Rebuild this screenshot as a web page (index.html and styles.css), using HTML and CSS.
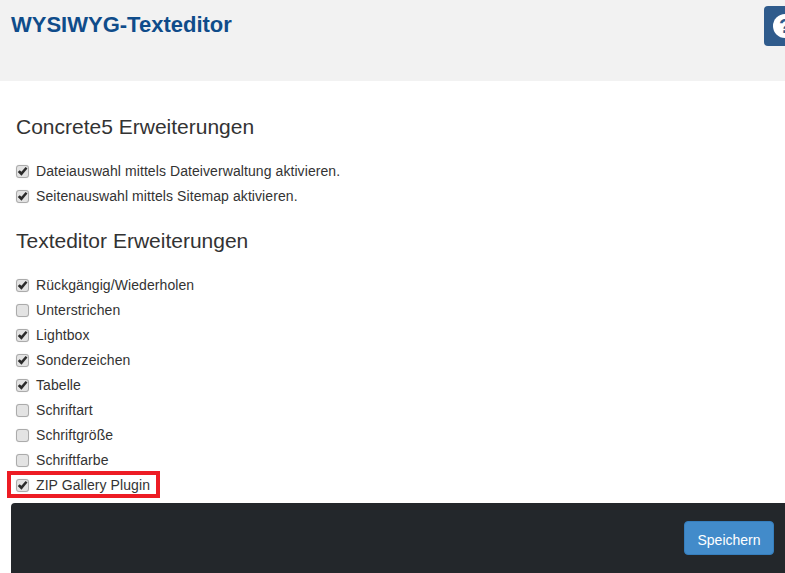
FILE: index.html
```html
<!DOCTYPE html>
<html>
<head>
    <title>WYSIWYG-Texteditor</title>
    <link rel="stylesheet" href="styles.css">
</head>
<body>
    <svg class="icon-defs" width="0" height="0">
        <symbol id="tick" viewBox="0 0 12 12">
            <path d="M0.8 6.6 L3 4.6 L4.8 6.4 L9.4 1 L11.4 2.8 L4.9 10.6 Z"></path>
        </symbol>
    </svg>

    <div class="header">
        <h1>WYSIWYG-Texteditor</h1>
        <button class="help-button">
            <span class="help-icon">?</span>
        </button>
    </div>

    <div class="content">
        <h2>Concrete5 Erweiterungen</h2>
        <div class="check-list">
            <label class="check-row"><span class="box"><svg><use href="#tick"></use></svg></span>Dateiauswahl mittels Dateiverwaltung aktivieren.</label>
            <label class="check-row"><span class="box"><svg><use href="#tick"></use></svg></span>Seitenauswahl mittels Sitemap aktivieren.</label>
        </div>

        <h2 class="second-title">Texteditor Erweiterungen</h2>
        <div class="check-list">
            <label class="check-row"><span class="box"><svg><use href="#tick"></use></svg></span>Rückgängig/Wiederholen</label>
            <label class="check-row"><span class="box"></span>Unterstrichen</label>
            <label class="check-row"><span class="box"><svg><use href="#tick"></use></svg></span>Lightbox</label>
            <label class="check-row"><span class="box"><svg><use href="#tick"></use></svg></span>Sonderzeichen</label>
            <label class="check-row"><span class="box"><svg><use href="#tick"></use></svg></span>Tabelle</label>
            <label class="check-row"><span class="box"></span>Schriftart</label>
            <label class="check-row"><span class="box"></span>Schriftgröße</label>
            <label class="check-row"><span class="box"></span>Schriftfarbe</label>
            <label class="check-row marked"><span class="box"><svg><use href="#tick"></use></svg></span>ZIP Gallery Plugin</label>
        </div>
    </div>

    <div class="footer">
        <button class="save-button">Speichern</button>
    </div>
</body>
</html>
```

FILE: styles.css
```css
html, body {
    height: 100%;
}

body {
    display: flex;
    flex-direction: column;
    margin: 0;
    overflow: hidden;
    background-color: #ffffff;
    color: #333333;
    font-family: "Liberation Sans", Arial, sans-serif;
    font-size: 14px;
}

.icon-defs {
    position: absolute;
}

.header {
    display: flex;
    justify-content: space-between;
    align-items: flex-start;
    height: 81px;
    flex-shrink: 0;
    background-color: #f2f2f2;
}

.header h1 {
    margin: 13px 0 0 11px;
    color: #0f4c8a;
    font-size: 22px;
    line-height: 24px;
    font-weight: bold;
}

.help-button {
    display: flex;
    align-items: center;
    width: 40px;
    height: 40px;
    margin: 6px -19px 0 0;
    padding: 0 0 0 9px;
    flex-shrink: 0;
    border: none;
    border-radius: 4px;
    background-color: #2f5b8c;
}

.help-icon {
    width: 24px;
    height: 24px;
    flex-shrink: 0;
    border-radius: 50%;
    background-color: #ffffff;
    color: #2f5b8c;
    font-size: 20px;
    line-height: 24px;
    font-weight: bold;
    text-align: center;
}

.content {
    flex-grow: 1;
    padding: 35px 0 0 16px;
}

h2 {
    margin: 0;
    font-size: 21px;
    line-height: 22px;
    font-weight: normal;
}

.second-title {
    margin-top: 21px;
}

.check-list {
    margin-top: 21px;
}

.check-row {
    display: flex;
    align-items: center;
    height: 25px;
    line-height: 25px;
    letter-spacing: 0.08px;
}

.box {
    display: flex;
    align-items: center;
    justify-content: center;
    box-sizing: border-box;
    width: 13px;
    height: 13px;
    margin: -1px 7px 0 0;
    border: 1px solid #ababab;
    border-radius: 3px;
    background-color: #e3e3e3;
    box-shadow: 0 0 1px #cccccc;
}

.box svg {
    width: 11px;
    height: 11px;
    fill: #2b2b2b;
}

.marked {
    position: relative;
}

.marked::after {
    content: "";
    position: absolute;
    left: -9px;
    top: -2px;
    width: 153px;
    height: 27px;
    box-sizing: border-box;
    border: 4px solid #ed1c24;
}

.footer {
    display: flex;
    justify-content: flex-end;
    align-items: center;
    height: 70px;
    margin-left: 11px;
    padding-right: 11px;
    flex-shrink: 0;
    border-top-left-radius: 4px;
    background-color: #23272b;
}

.save-button {
    width: 90px;
    height: 34px;
    padding: 3px 0 0;
    border: 1px solid #357ebd;
    border-radius: 4px;
    background-color: #428bca;
    color: #ffffff;
    font-family: "Liberation Sans", Arial, sans-serif;
    font-size: 14px;
}
```
